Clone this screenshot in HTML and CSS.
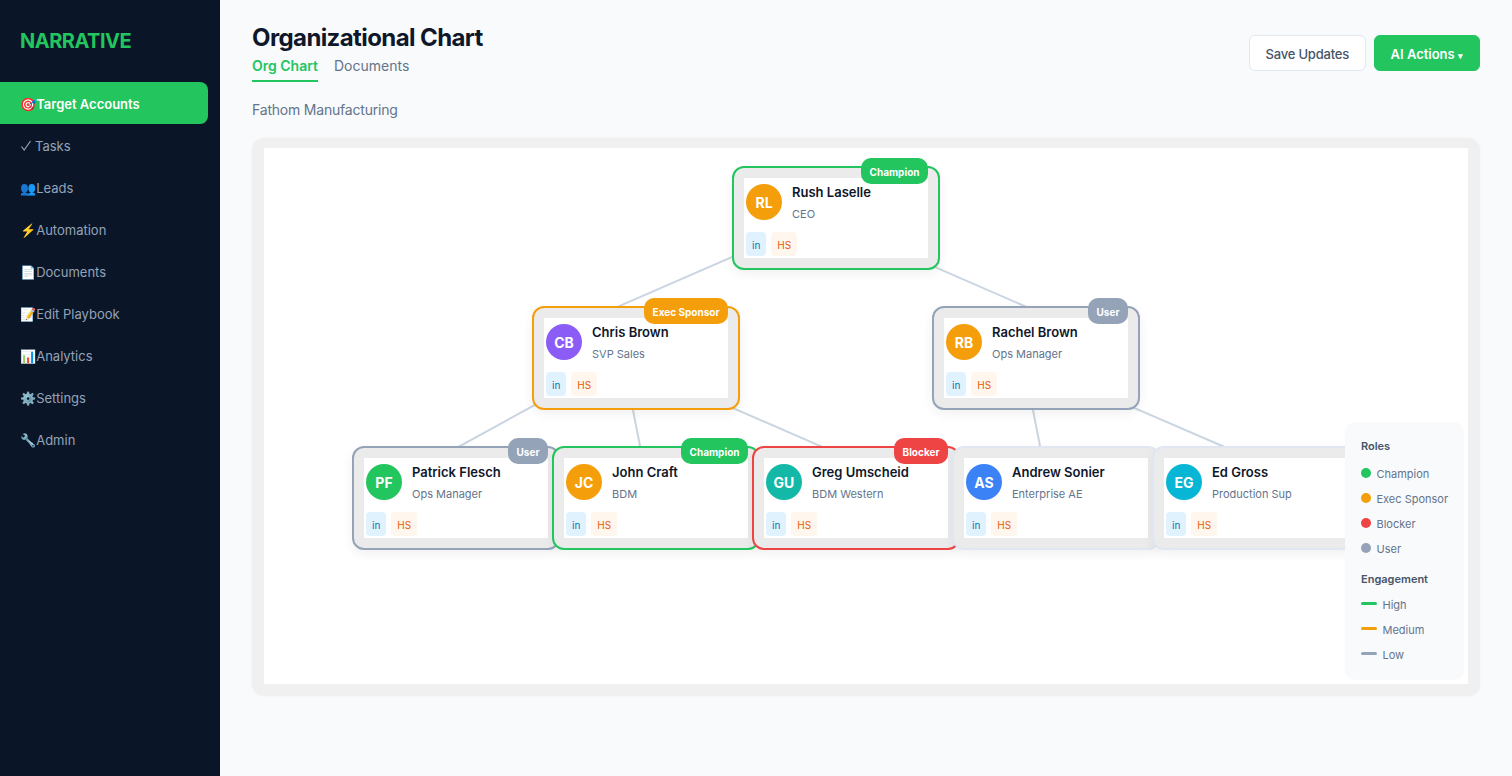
FILE: index.html
```html
<!DOCTYPE html>
<html lang="en">
<head>
<meta charset="utf-8">
<title>Organizational Chart</title>
<link rel="stylesheet" href="styles.css">
</head>
<body>
<div class="app">
  <aside class="sidebar">
    <div class="logo">NARRATIVE</div>
    <nav class="nav">
      <a class="nav-item active">🎯Target Accounts</a>
      <a class="nav-item"><svg class="check" width="15" height="12" viewBox="0 0 15 12"><path d="M1.5 6.5 L4.2 10 L10.5 1"/></svg>Tasks</a>
      <a class="nav-item">👥Leads</a>
      <a class="nav-item">⚡Automation</a>
      <a class="nav-item">📄Documents</a>
      <a class="nav-item">📝Edit Playbook</a>
      <a class="nav-item">📊Analytics</a>
      <a class="nav-item">⚙️Settings</a>
      <a class="nav-item">🔧Admin</a>
    </nav>
  </aside>
  <main class="main">
    <header class="top">
      <div>
        <h1 class="title">Organizational Chart</h1>
        <div class="tabs"><span class="tab on">Org Chart</span><span class="tab">Documents</span></div>
      </div>
      <div class="actions">
        <button class="btn">Save Updates</button>
        <button class="btn primary">AI Actions <span class="caret">▾</span></button>
      </div>
    </header>
    <p class="company">Fathom Manufacturing</p>
    <section class="frame">
      <div class="canvas">
        <svg class="links" width="1204" height="536" viewBox="0 0 1204 536">
          <path d="M488 100.3 L338 165.7 M651 110.3 L778 165.7 M289 247 L176 309 M367 252 L378 308 M452 252.6 L576 306.7 M767 252 L778 308 M851 251.6 L978 306.5"/>
        </svg>

        <div class="node champion n-rl"><span class="badge">Champion</span><div class="node-in">
          <div class="person"><span class="av c-amber">RL</span><div><div class="name">Rush Laselle</div><div class="role">CEO</div></div></div>
          <div class="chips"><span class="chip in">in</span><span class="chip hs">HS</span></div></div></div>

        <div class="node sponsor n-cb"><span class="badge">Exec Sponsor</span><div class="node-in">
          <div class="person"><span class="av c-violet">CB</span><div><div class="name">Chris Brown</div><div class="role">SVP Sales</div></div></div>
          <div class="chips"><span class="chip in">in</span><span class="chip hs">HS</span></div></div></div>

        <div class="node user n-rb"><span class="badge">User</span><div class="node-in">
          <div class="person"><span class="av c-amber">RB</span><div><div class="name">Rachel Brown</div><div class="role">Ops Manager</div></div></div>
          <div class="chips"><span class="chip in">in</span><span class="chip hs">HS</span></div></div></div>

        <div class="node user n-pf"><span class="badge">User</span><div class="node-in">
          <div class="person"><span class="av c-green">PF</span><div><div class="name">Patrick Flesch</div><div class="role">Ops Manager</div></div></div>
          <div class="chips"><span class="chip in">in</span><span class="chip hs">HS</span></div></div></div>

        <div class="node champion n-jc"><span class="badge">Champion</span><div class="node-in">
          <div class="person"><span class="av c-amber">JC</span><div><div class="name">John Craft</div><div class="role">BDM</div></div></div>
          <div class="chips"><span class="chip in">in</span><span class="chip hs">HS</span></div></div></div>

        <div class="node blocker n-gu"><span class="badge">Blocker</span><div class="node-in">
          <div class="person"><span class="av c-teal">GU</span><div><div class="name">Greg Umscheid</div><div class="role">BDM Western</div></div></div>
          <div class="chips"><span class="chip in">in</span><span class="chip hs">HS</span></div></div></div>

        <div class="node plain n-as"><div class="node-in">
          <div class="person"><span class="av c-blue">AS</span><div><div class="name">Andrew Sonier</div><div class="role">Enterprise AE</div></div></div>
          <div class="chips"><span class="chip in">in</span><span class="chip hs">HS</span></div></div></div>

        <div class="node plain n-eg"><div class="node-in">
          <div class="person"><span class="av c-cyan">EG</span><div><div class="name">Ed Gross</div><div class="role">Production Sup</div></div></div>
          <div class="chips"><span class="chip in">in</span><span class="chip hs">HS</span></div></div></div>

        <aside class="legend">
          <div class="legend-h">Roles</div>
          <div class="lg"><i class="dot g"></i>Champion</div>
          <div class="lg"><i class="dot a"></i>Exec Sponsor</div>
          <div class="lg"><i class="dot r"></i>Blocker</div>
          <div class="lg"><i class="dot s"></i>User</div>
          <div class="legend-h second">Engagement</div>
          <div class="lg"><i class="bar g"></i>High</div>
          <div class="lg"><i class="bar a"></i>Medium</div>
          <div class="lg"><i class="bar s"></i>Low</div>
        </aside>
      </div>
    </section>
  </main>
</div>
</body>
</html>
```
FILE: styles.css
```css
* { box-sizing: border-box; }
html, body { margin: 0; height: 100%; }
body { font-family: Inter, "Liberation Sans", "Noto Color Emoji", sans-serif; background: #f8fafc; color: #0f172a; overflow: hidden; }
.app { display: flex; height: 776px; }
.sidebar { width: 220px; flex: none; background: #0a1628; padding-top: 29px; }
.logo { font-size: 20px; font-weight: 700; line-height: 24px; letter-spacing: -0.5px; color: #22c55e; padding-left: 20px; margin-bottom: 29px; }
.nav { display: flex; flex-direction: column; }
.nav-item { height: 42px; width: 208px; display: flex; align-items: center; white-space: pre; padding: 2px 0 0 20px; font-size: 13px; font-weight: 400; color: #94a3b8; }
.nav-item.active { background: #22c55e; color: #fff; font-weight: 600; border-radius: 0 8px 8px 0; }
.check { flex: none; margin-bottom: 1px; }
.check path { fill: none; stroke: #94a3b8; stroke-width: 1.2; }
.main { flex: 1; padding: 21px 32px 0; min-width: 0; }
.top { display: flex; justify-content: space-between; align-items: flex-start; }
.title { margin: 0; font-size: 24px; line-height: 34px; font-weight: 700; letter-spacing: -0.6px; }
.tabs { display: flex; gap: 16px; margin-top: -1px; }
.tab { font-size: 14px; line-height: 20px; padding: 2px 0 4px; font-weight: 400; color: #64748b; }
.tab.on { color: #22c55e; font-weight: 600; border-bottom: 2px solid #22c55e; }
.actions { display: flex; gap: 8px; margin-top: 14px; }
.btn { height: 36px; padding: 2px 15.5px 0; border: 1px solid #e2e8f0; border-radius: 6px; background: #fff; font: 500 13px Inter, sans-serif; letter-spacing: -0.2px; color: #475569; }
.btn.primary { padding: 2px 16px 0; background: #22c55e; border-color: #22c55e; color: #fff; font-weight: 600; letter-spacing: 0; }
.caret { font-size: 9px; }
.company { margin: 18px 0 0; font-size: 14px; line-height: 20px; letter-spacing: -0.2px; color: #64748b; }
.frame { margin-top: 18px; height: 558px; width: 1228px; padding: 10px 12px 12px; background: #f0f0f0; border-radius: 12px; box-shadow: 0 0 3px rgba(0,0,0,.04); }
.canvas { position: relative; height: 536px; background: #fff; }
.links { position: absolute; left: 0; top: 0; }
.links path { fill: none; stroke: #cbd5e1; stroke-width: 2; }
.node { position: absolute; width: 208px; height: 104px; border: 2px solid #94a3b8; border-radius: 12px; background: #ebebeb; padding: 10px; box-shadow: 0 4px 12px rgba(0,0,0,.06); }
.node-in { height: 80px; background: #fff; padding: 6px 2px 2px; display: flex; flex-direction: column; justify-content: space-between; }
.person { display: flex; gap: 10px; align-items: flex-start; }
.av { width: 36px; height: 36px; border-radius: 50%; display: flex; align-items: center; justify-content: center; flex: none; color: #fff; font-size: 14px; font-weight: 700; }
.name { font-size: 13px; font-weight: 600; line-height: 16px; color: #0f172a; }
.role { font-size: 11px; line-height: 14px; margin-top: 7px; color: #64748b; }
.chips { display: flex; gap: 5px; }
.chip { height: 24px; border-radius: 4px; font-size: 10px; font-weight: 400; display: flex; align-items: center; padding: 2px 6px 0; }
.chip.in { background: #e0f2fe; color: #0077b5; }
.chip.hs { background: #fff7ed; color: #ea580c; }
.badge { position: absolute; right: 10px; top: -10px; height: 26px; padding: 2px 8.5px 0; border-radius: 10px; display: flex; align-items: center; font-size: 10px; font-weight: 700; color: #fff; }
.champion { border-color: #22c55e; }
.champion .badge { background: #22c55e; }
.sponsor { border-color: #f59e0b; }
.sponsor .badge { background: #f59e0b; }
.user { border-color: #94a3b8; }
.user .badge { background: #94a3b8; }
.blocker { border-color: #ef4444; }
.blocker .badge { background: #ef4444; }
.plain { border-color: #e0e7f2; }
.n-rl { left: 468px; top: 18px; }
.n-cb { left: 268px; top: 158px; }
.n-rb { left: 668px; top: 158px; }
.n-pf { left: 88px; top: 298px; }
.n-jc { left: 288px; top: 298px; }
.n-gu { left: 488px; top: 298px; }
.n-as { left: 688px; top: 298px; }
.n-eg { left: 888px; top: 298px; }
.c-amber { background: #f59e0b; }
.c-violet { background: #8b5cf6; }
.c-green { background: #22c55e; }
.c-teal { background: #14b8a6; }
.c-blue { background: #3b82f6; }
.c-cyan { background: #06b6d4; }
.legend { position: absolute; right: 4px; bottom: 4px; width: 119px; height: 258px; background: #f8fafc; border-radius: 10px; padding: 17px 16px 16px; font-size: 11px; color: #64748b; }
.legend-h { font-weight: 600; font-size: 11px; line-height: 14px; color: #475569; margin-bottom: 8px; }
.legend-h.second { margin-top: 11px; margin-bottom: 6px; }
.lg { display: flex; align-items: center; gap: 5.5px; height: 25px; white-space: nowrap; }
.dot { width: 10px; height: 10px; border-radius: 50%; flex: none; margin-bottom: 2px; }
.bar { width: 16px; height: 3px; border-radius: 2px; flex: none; margin-bottom: 2px; }
.g { background: #22c55e; }
.a { background: #f59e0b; }
.r { background: #ef4444; }
.s { background: #94a3b8; }
```
